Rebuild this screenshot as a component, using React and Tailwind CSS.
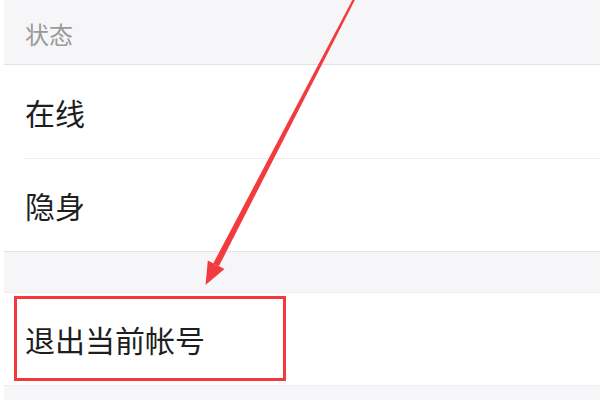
const font = { fontFamily: '"Noto Sans CJK SC", "Noto Sans", sans-serif' };

export default function App() {
  return (
    <div className="relative w-[600px] h-[400px] overflow-hidden bg-white pl-[4px]" style={font}>
      <div className="h-full flex flex-col bg-[#f6f6f8]">
        {/* section header */}
        <div className="h-[65px] flex items-center pl-[21px] border-b border-[#e3e3e5]">
          <span className="text-[24px] text-[#9a9a9c] leading-none pt-[4px]">状态</span>
        </div>

        <div className="bg-white pl-[21px]">
          <div className="h-[94px] flex items-center border-b border-[#ececee]">
            <span className="text-[30px] text-[#1e1e1e] leading-none">在线</span>
          </div>
        </div>
        <div className="bg-white border-b border-[#e3e3e5]">
          <div className="h-[92px] flex items-center pl-[21px]">
            <span className="text-[30px] text-[#1e1e1e] leading-none">隐身</span>
          </div>
        </div>

        <div className="h-[41px] border-b border-[#ececee]" />

        <div className="relative bg-white border-b border-[#ececee]">
          <div className="h-[92px] flex items-center pl-[21px]">
            <span className="text-[30px] text-[#1e1e1e] leading-none">退出当前帐号</span>
          </div>
          {/* red highlight box */}
          <div className="absolute left-[10px] top-[3px] w-[272px] h-[85px] border-[3px] border-[#f2393e]" />
        </div>
      </div>

      {/* annotation arrow */}
      <svg className="absolute left-0 top-0" width="600" height="400" viewBox="0 0 600 400">
        <polygon points="353.4,-2 355.4,-1 219,266 213.2,263.5" fill="#f23b3e" />
        <polygon points="205.5,285 224.5,269 207.8,260.5" fill="#f23b3e" />
      </svg>
    </div>
  );
}
